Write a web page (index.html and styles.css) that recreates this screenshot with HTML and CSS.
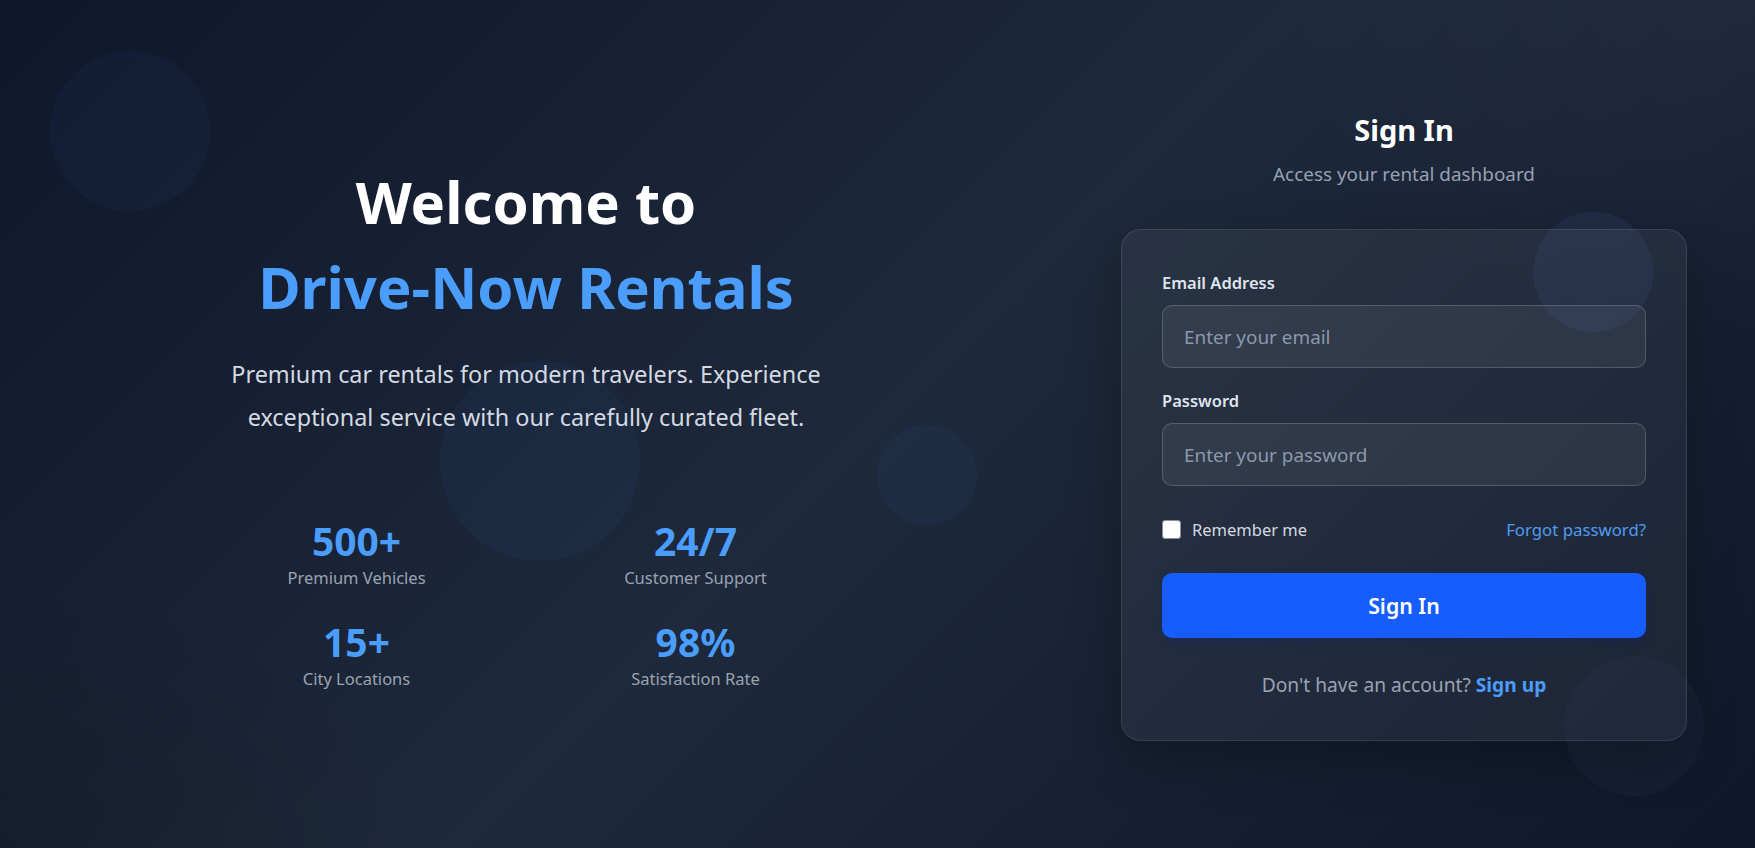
FILE: index.html
```html
<!DOCTYPE html>
<html lang="en">
<head>
<meta charset="utf-8">
<title>Drive-Now Rentals – Sign In</title>
<link rel="stylesheet" href="styles.css">
</head>
<body>
<div class="page">
  <span class="orb orb-a"></span>
  <span class="orb orb-b"></span>
  <span class="orb orb-c"></span>
  <span class="orb orb-d"></span>
  <span class="orb orb-e"></span>

  <section class="hero">
    <h1 class="hero-title">
      <span class="hero-line">Welcome to</span>
      <span class="hero-line hero-brand">Drive-Now Rentals</span>
    </h1>
    <p class="hero-text">Premium car rentals for modern travelers. Experience exceptional service with our carefully curated fleet.</p>
    <div class="stats">
      <div class="stat"><span class="stat-num">500+</span><span class="stat-label">Premium Vehicles</span></div>
      <div class="stat"><span class="stat-num">24/7</span><span class="stat-label">Customer Support</span></div>
      <div class="stat"><span class="stat-num">15+</span><span class="stat-label">City Locations</span></div>
      <div class="stat"><span class="stat-num">98%</span><span class="stat-label">Satisfaction Rate</span></div>
    </div>
  </section>

  <section class="auth">
    <h2 class="auth-title">Sign In</h2>
    <p class="auth-sub">Access your rental dashboard</p>
    <form class="card">
      <label class="field-label" for="email">Email Address</label>
      <input class="field-input" id="email" type="email" placeholder="Enter your email">
      <label class="field-label field-label-2" for="pw">Password</label>
      <input class="field-input" id="pw" type="password" placeholder="Enter your password">
      <div class="row">
        <label class="remember"><input class="check" type="checkbox"><span>Remember me</span></label>
        <a class="forgot" href="#">Forgot password?</a>
      </div>
      <button class="submit" type="button">Sign In</button>
      <p class="signup">Don't have an account? <a class="signup-link" href="#">Sign up</a></p>
    </form>
  </section>
</div>
</body>
</html>
```
FILE: styles.css
```css
* { box-sizing: border-box; }
html, body { margin: 0; padding: 0; }
body {
  font-family: "Noto Sans", "Open Sans", sans-serif;
  color: #fff;
  background: #0f172a;
}
.page {
  position: relative;
  min-height: 100vh;
  height: 848px;
  overflow: hidden;
  display: flex;
  align-items: center;
  padding: 0 68px;
  background:
    radial-gradient(ellipse 700px 500px at 100% 0%, rgba(255, 255, 255, 0.03), transparent 70%),
    radial-gradient(ellipse 600px 400px at 0% 100%, rgba(0, 0, 0, 0.14), transparent 70%),
    linear-gradient(135deg, #0f172a 0%, #1e293b 50%, #0f172a 100%);
}
.orb {
  position: absolute;
  border-radius: 50%;
  background: rgba(59, 130, 246, 0.045);
  pointer-events: none;
}
.orb-a { left: 50px; top: 51px; width: 160px; height: 160px; }
.orb-b { left: 440px; top: 361px; width: 200px; height: 200px; background: rgba(59,130,246,0.05); }
.orb-c { left: 877px; top: 425px; width: 100px; height: 100px; background: rgba(59,130,246,0.06); }
.orb-d { left: 1533px; top: 212px; width: 120px; height: 120px; background: rgba(96,140,230,0.08); z-index: 2; }
.orb-e { left: 1564px; top: 656px; width: 140px; height: 140px; background: rgba(120,150,210,0.04); z-index: 2; }

.hero {
  position: relative;
  z-index: 1;
  flex: 1;
  margin-right: 137px;
  text-align: center;
}
.hero-title {
  margin: 0;
  font-size: 58px;
  font-weight: 700;
  line-height: 85px;
}
.hero-line { display: block; }
.hero-brand { color: #4a9dfb; }
.hero-text {
  margin: 24px auto 0;
  max-width: 640px;
  font-size: 23.4px;
  line-height: 43px;
  color: #d4d9e2;
}
.stats {
  margin: 78px auto 0;
  width: 639px;
  display: grid;
  grid-template-columns: 1fr 1fr;
  column-gap: 39px;
  row-gap: 29px;
}
.stat { display: flex; flex-direction: column; align-items: center; }
.stat-num {
  font-size: 39px;
  font-weight: 700;
  line-height: 47px;
  color: #4a9dfb;
}
.stat-label {
  margin-top: 3px;
  font-size: 16.5px;
  line-height: 22px;
  color: #9aa3b2;
}

.auth {
  position: relative;
  z-index: 1;
  width: 566px;
  flex: none;
  text-align: center;
  margin-top: 5px;
}
.auth-title {
  margin: 0;
  font-size: 29px;
  font-weight: 700;
  line-height: 36px;
}
.auth-sub {
  margin: 12px 0 0;
  font-size: 18.9px;
  line-height: 28px;
  color: #97a1b3;
}
.card {
  margin-top: 41px;
  display: flex;
  flex-direction: column;
  text-align: left;
  padding: 42px 40px 42px;
  border-radius: 20px;
  border: 1px solid rgba(255, 255, 255, 0.1);
  background: rgba(255, 255, 255, 0.05);
  box-shadow: 0 20px 50px rgba(0, 0, 0, 0.25);
}
.field-label {
  font-size: 16.5px;
  font-weight: 600;
  line-height: 22px;
  color: #dfe4ec;
}
.field-label-2 { margin-top: 22px; }
.field-input {
  margin-top: 11px;
  height: 63px;
  width: 100%;
  padding: 0 21px;
  border-radius: 10px;
  border: 1px solid rgba(255, 255, 255, 0.18);
  background: rgba(255, 255, 255, 0.06);
  color: #fff;
  font-family: inherit;
  font-size: 18.9px;
  outline: none;
}
.field-input::placeholder { color: #8e98aa; }
.row {
  margin-top: 31px;
  height: 24px;
  display: flex;
  align-items: center;
  justify-content: space-between;
}
.remember {
  display: flex;
  align-items: center;
  gap: 11px;
  font-size: 16.5px;
  color: #d4d9e2;
}
.check {
  appearance: none;
  -webkit-appearance: none;
  margin: 0;
  width: 19px;
  height: 19px;
  border-radius: 3px;
  background: #fff;
  border: 1px solid #8a8f98;
}
.forgot {
  font-size: 16.8px;
  color: #4f9cf0;
  text-decoration: none;
}
.submit {
  margin-top: 32px;
  height: 65px;
  width: 100%;
  border: 0;
  border-radius: 10px;
  background: #165dfc;
  color: #fff;
  font-family: inherit;
  font-size: 21.3px;
  font-weight: 600;
  box-shadow: 0 4px 10px rgba(10, 40, 120, 0.3);
}
.signup {
  margin: 34px 0 0;
  text-align: center;
  font-size: 19.2px;
  line-height: 26px;
  color: #9aa3b2;
}
.signup-link {
  color: #4a9dfb;
  font-weight: 700;
  text-decoration: none;
}
```
